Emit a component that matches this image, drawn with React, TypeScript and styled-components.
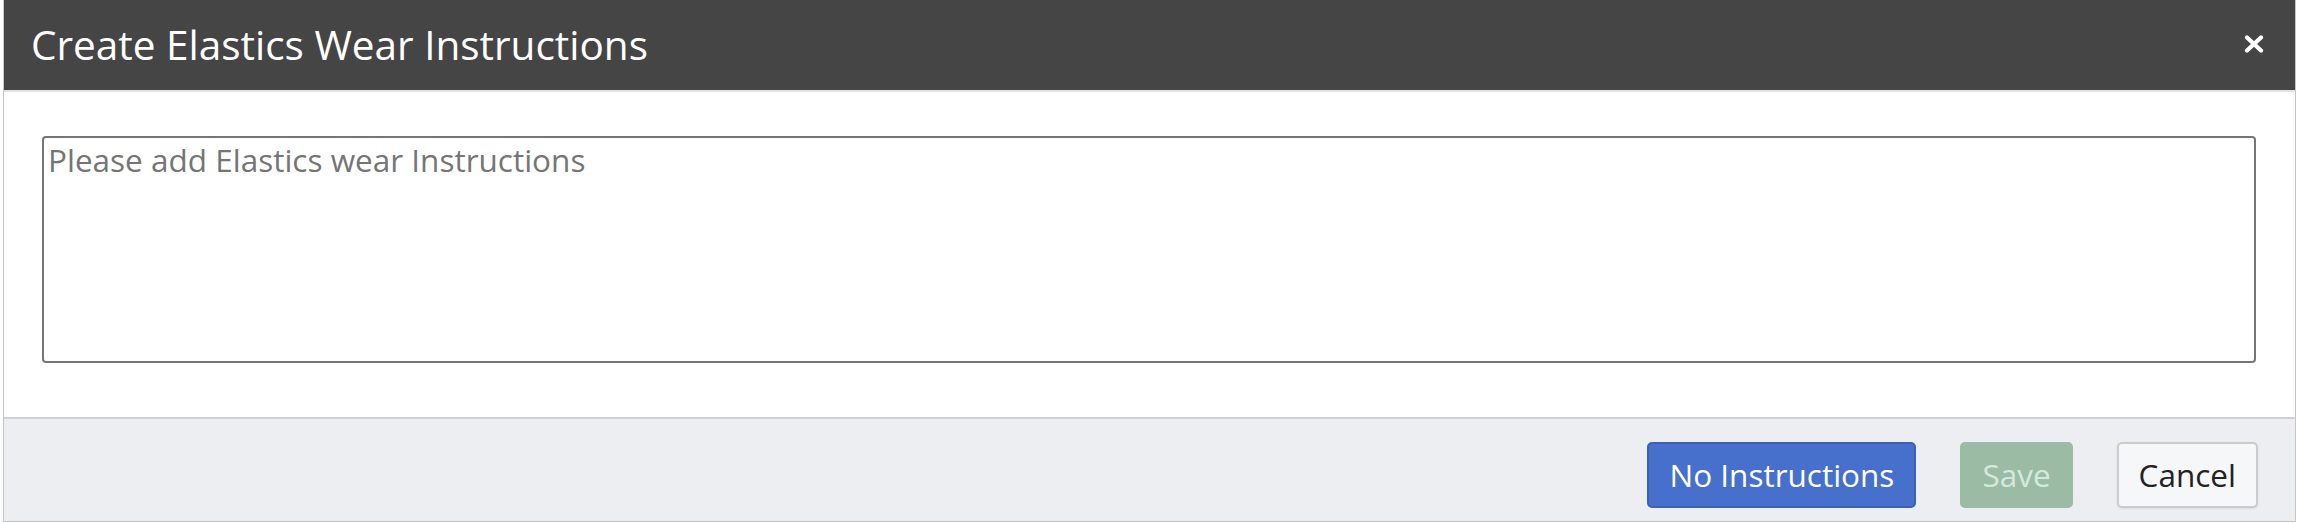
import styled, { createGlobalStyle } from "styled-components";

const GlobalStyle = createGlobalStyle`
  html, body {
    margin: 0;
    padding: 0;
    background: #ffffff;
    font-family: "Open Sans", "Liberation Sans", sans-serif;
  }
`;

const Dialog = styled.div`
  margin: 0 3px 0 3px;
  height: 521px;
  display: flex;
  flex-direction: column;
  border: 1px solid #c6c6c6;
  border-top: none;
  background: #ffffff;
`;

const Header = styled.div`
  height: 88px;
  display: flex;
  align-items: center;
  justify-content: space-between;
  padding: 0 30px 2px 27px;
  background: #454545;
  border-bottom: 2px solid #e2e2e2;
`;

const Title = styled.h1`
  margin: 0;
  font-size: 40.5px;
  font-weight: 400;
  color: #ffffff;
`;

const CloseButton = styled.button`
  display: flex;
  align-items: center;
  justify-content: center;
  width: 22px;
  height: 22px;
  padding: 0;
  border: none;
  background: transparent;
  cursor: pointer;
`;

const Body = styled.div`
  padding: 44px 39px 54px 38px;
`;

const TextArea = styled.textarea`
  display: block;
  box-sizing: border-box;
  width: 100%;
  height: 227px;
  margin: 0;
  padding: 0 4px;
  border: 2px solid #767676;
  border-radius: 4px;
  resize: none;
  font-family: "Open Sans", "Liberation Sans", sans-serif;
  font-size: 31.5px;
  color: #333333;

  &::placeholder {
    color: #757575;
  }
`;

const Footer = styled.div`
  flex: 1;
  display: flex;
  align-items: flex-start;
  justify-content: flex-end;
  gap: 44px;
  padding: 23px 37px 0 0;
  background: #edeef2;
  border-top: 2px solid #cfd0d4;
`;

const variants = {
  primary: `
    background: #4670cb;
    border-color: #3c60b5;
    color: #ffffff;
  `,
  disabled: `
    background: #9bbba4;
    border-color: #9bbba4;
    color: #d6e8dc;
  `,
  default: `
    background: #f6f7f8;
    border-color: #cbcbcb;
    color: #222222;
    box-shadow: 0 1px 2px rgba(0, 0, 0, 0.08);
  `,
};

const Button = styled.button<{ $variant: keyof typeof variants }>`
  box-sizing: border-box;
  height: 66px;
  padding: 0 20px;
  border: 2px solid;
  border-radius: 5px;
  font-family: "Open Sans", "Liberation Sans", sans-serif;
  font-size: 31.5px;
  line-height: 1;
  cursor: pointer;
  ${({ $variant }) => variants[$variant]}
`;

const CloseIcon = () => (
  <svg width="20" height="18" viewBox="0 0 20 18">
    <path
      d="M3 2.5 L17 15.5 M17 2.5 L3 15.5"
      stroke="#ffffff"
      strokeWidth="4.2"
      strokeLinecap="round"
    />
  </svg>
);

const App = () => {
  return (
    <>
      <GlobalStyle />
      <Dialog>
        <Header>
          <Title>Create Elastics Wear Instructions</Title>
          <CloseButton aria-label="Close">
            <CloseIcon />
          </CloseButton>
        </Header>
        <Body>
          <TextArea placeholder="Please add Elastics wear Instructions" />
        </Body>
        <Footer>
          <Button $variant="primary">No Instructions</Button>
          <Button $variant="disabled" disabled>
            Save
          </Button>
          <Button $variant="default">Cancel</Button>
        </Footer>
      </Dialog>
    </>
  );
};

export default App;
